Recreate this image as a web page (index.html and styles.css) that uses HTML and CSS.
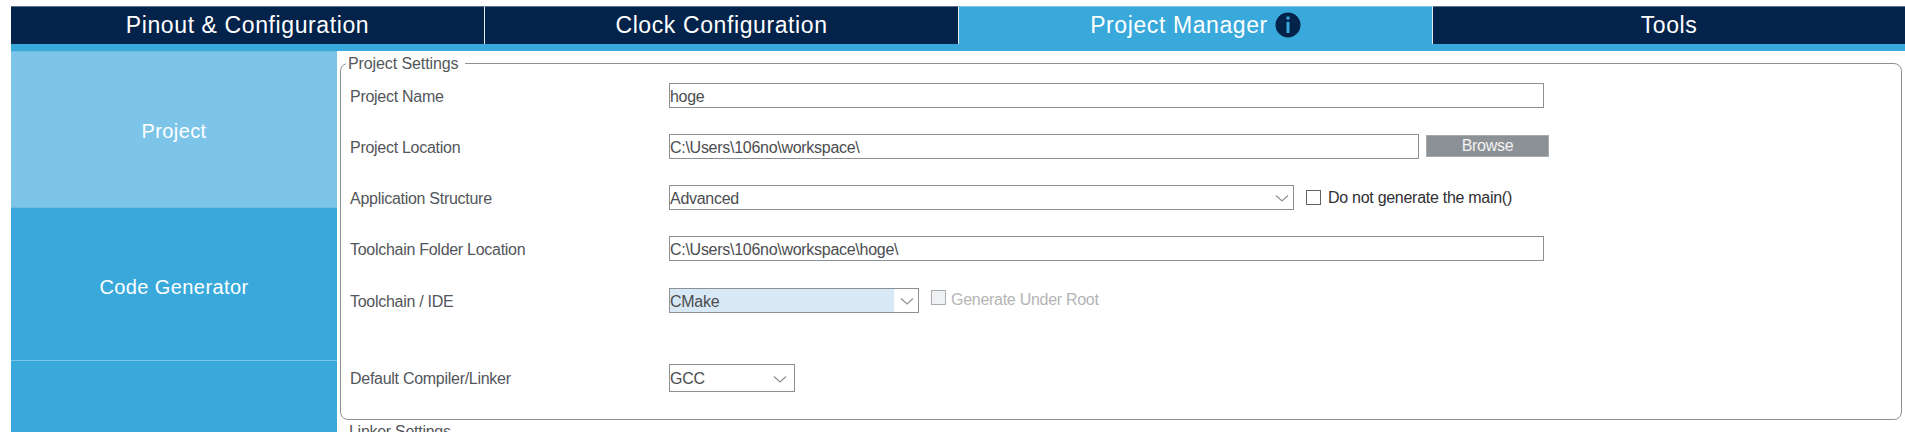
FILE: index.html
```html
<!DOCTYPE html>
<html lang="en">
<head>
<meta charset="utf-8">
<title>Project Manager</title>
<link rel="stylesheet" href="styles.css">
</head>
<body>
<nav class="tabs">
  <div class="tab">Pinout &amp; Configuration</div>
  <div class="tab">Clock Configuration</div>
  <div class="tab tab-active">Project Manager
    <svg class="info" viewBox="0 0 26 26" width="26" height="26" aria-hidden="true">
      <circle cx="13" cy="13" r="12.5" fill="#03234b"/>
      <rect x="11.5" y="4.5" width="3" height="3" fill="#39a9dc"/>
      <rect x="11.5" y="10" width="3" height="11" fill="#39a9dc"/>
    </svg>
  </div>
  <div class="tab tab-last">Tools</div>
</nav>
<div class="strip"></div>
<div class="content">
  <aside class="side">
    <div class="side-item side-current">Project</div>
    <div class="side-item">Code Generator</div>
    <div class="side-rest"></div>
  </aside>
  <main class="main">
    <fieldset class="group">
      <legend class="legend">Project Settings</legend>
      <div class="row">
        <span class="label">Project Name</span>
        <div class="field w-full">hoge</div>
      </div>
      <div class="row">
        <span class="label">Project Location</span>
        <div class="field w-loc">C:\Users\106no\workspace\</div>
        <div class="browse">Browse</div>
      </div>
      <div class="row">
        <span class="label">Application Structure</span>
        <div class="field w-app">Advanced
          <svg class="chev" viewBox="0 0 14 8" width="14" height="8" aria-hidden="true"><path d="M1 1.5l6 5.5 6-5.5" fill="none" stroke="#8c9196" stroke-width="1.2"/></svg>
        </div>
        <span class="box"></span>
        <span class="check-label">Do not generate the main()</span>
      </div>
      <div class="row row-before-ide">
        <span class="label">Toolchain Folder Location</span>
        <div class="field w-full">C:\Users\106no\workspace\hoge\</div>
      </div>
      <div class="row">
        <span class="label">Toolchain / IDE</span>
        <div class="field w-ide"><span class="selected">CMake</span>
          <svg class="chev" viewBox="0 0 14 8" width="14" height="8" aria-hidden="true"><path d="M1 1.5l6 5.5 6-5.5" fill="none" stroke="#8c9196" stroke-width="1.2"/></svg>
        </div>
        <span class="box box-off"></span>
        <span class="check-label check-off">Generate Under Root</span>
      </div>
      <div class="row row-tall">
        <span class="label">Default Compiler/Linker</span>
        <div class="field w-gcc">GCC
          <svg class="chev" viewBox="0 0 14 8" width="14" height="8" aria-hidden="true"><path d="M1 1.5l6 5.5 6-5.5" fill="none" stroke="#8c9196" stroke-width="1.2"/></svg>
        </div>
      </div>
    </fieldset>
    <div class="next-legend">Linker Settings</div>
  </main>
</div>
</body>
</html>
```

FILE: styles.css
```css
html, body {
  margin: 0;
  height: 432px;
  overflow: hidden;
  background: #fff;
}
body {
  padding: 6px 0 0 11px;
  box-sizing: border-box;
  font-family: "Liberation Sans", Arial, sans-serif;
  font-size: 16px;
  letter-spacing: -0.28px;
  color: #53565a;
}
.tabs {
  display: flex;
  height: 38px;
}
.tab {
  width: 474px;
  box-sizing: border-box;
  display: flex;
  align-items: center;
  justify-content: center;
  gap: 7px;
  background: #03234b;
  color: #fff;
  font-size: 23px;
  letter-spacing: 0.6px;
  border-top: 1px solid #5f7188;
  border-right: 1px solid #e6ebf0;
}
.tab-active {
  background: #39a9dc;
  border-top-color: #7cc5e9;
}
.tab-last {
  flex: 1;
  border-right: 0;
}
.info { margin-top: -1px; }
.strip {
  height: 7px;
  background: #39a9dc;
}
.content {
  display: flex;
  height: 381px;
}
.side {
  width: 326px;
  display: flex;
  flex-direction: column;
  background: #39a9dc;
  color: #fff;
  font-size: 20px;
  letter-spacing: 0.4px;
}
.side-item {
  height: 153px;
  box-sizing: border-box;
  padding-top: 6px;
  display: flex;
  align-items: center;
  justify-content: center;
  border-bottom: 1px solid #7cc5e9;
}
.side-current {
  height: 157px;
  padding-top: 3px;
  background: #7cc5e9;
  border-top: 1px solid #6bbde4;
  border-bottom: 1px solid #6bbde4;
}
.side-rest { flex: 1; }
.main {
  flex: 1;
  padding: 3px 3px 0 3px;
  min-width: 0;
}
.group {
  margin: 0;
  padding: 10px 0 0 9px;
  height: 366px;
  box-sizing: border-box;
  border: 1px solid #8c9196;
  border-radius: 8px;
}
.legend {
  padding: 0 7px 0 2px;
  margin-left: -4px;
  line-height: 19px;
  letter-spacing: -0.1px;
}
.row {
  display: flex;
  align-items: center;
  height: 25px;
  margin-bottom: 26px;
}
.row-before-ide { margin-bottom: 27px; }
.row-tall {
  height: 28px;
  margin-top: 51px;
  margin-bottom: 0;
}
.label {
  width: 319px;
  flex: none;
  padding-top: 2px;
  box-sizing: border-box;
}
.field {
  position: relative;
  box-sizing: border-box;
  height: 100%;
  border: 1px solid #8c9196;
  line-height: 25px;
  color: #4b4d50;
  flex: none;
}
.w-full { width: 875px; }
.w-loc { width: 750px; }
.w-app { width: 625px; }
.w-ide { width: 250px; }
.w-gcc { width: 126px; line-height: 27px; }
.selected {
  display: block;
  width: 224px;
  height: 23px;
  background: #d8e8f5;
}
.chev {
  position: absolute;
  right: 4px;
  top: 8px;
}
.w-gcc .chev { top: 10px; right: 7px; }
.browse {
  width: 123px;
  height: 22px;
  margin: 0 0 1px 7px;
  box-sizing: border-box;
  display: flex;
  align-items: center;
  justify-content: center;
  background: #8c9196;
  border: 1px solid #a7abaf;
  color: #f2f3f4;
  flex: none;
}
.box {
  width: 15px;
  height: 15px;
  box-sizing: border-box;
  border: 1px solid #5f6368;
  margin-left: 12px;
  flex: none;
}
.box-off {
  border-color: #a9adb1;
  background: #f0f1f2;
  margin-top: -7px;
}
.check-label {
  margin-left: 7px;
  color: #2f2f33;
}
.check-off {
  margin-left: 5px;
  margin-top: -2px;
  color: #b4b4b4;
}
.next-legend {
  margin: 3px 0 0 9px;
  line-height: 17px;
}
```
